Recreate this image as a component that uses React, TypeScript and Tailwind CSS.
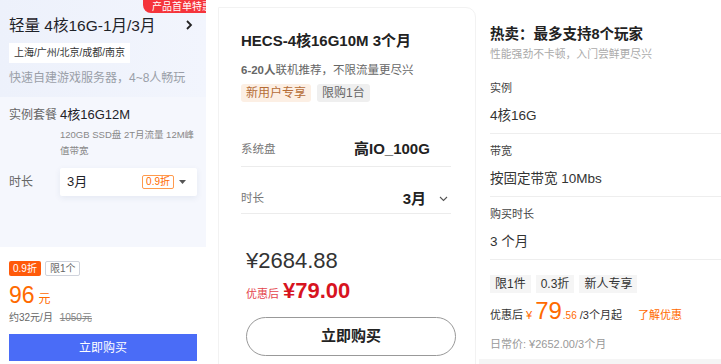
export default function App() {
  return (
    <div className="flex w-[721px] h-[364px] overflow-hidden bg-white items-start [font-family:'Liberation_Sans','Noto_Sans_CJK_SC',sans-serif]">
      {/* 轻量 card */}
      <div className="w-[206px] h-[364px] flex flex-col overflow-hidden shrink-0">
        <div className="relative h-[97px] px-[9px] pt-[14px] bg-linear-to-r from-[#edf1fb] to-[#f2f5fd]">
          <div className="absolute top-0 left-[143px] h-[13px] w-[72px] bg-[#f5343b] rounded-bl-[8px] pl-[9px] text-[10px] leading-[13px] text-white whitespace-nowrap overflow-hidden">
            产品首单特惠
          </div>
          <div className="flex items-center justify-between pr-[4px]">
            <div className="text-[15.5px] leading-[24px] text-[#1f2329]">轻量 4核16G-1月/3月</div>
            <svg width="8" height="10" viewBox="0 0 8 10" className="mt-[-2px]">
              <polyline points="2,1 6,5 2,9" fill="none" stroke="#222" strokeWidth="1.8" />
            </svg>
          </div>
          <div className="mt-[5px] inline-block bg-white px-[5px] h-[20px] leading-[20px] text-[10px] text-[#333]">
            上海/广州/北京/成都/南京
          </div>
          <div className="mt-[6px] text-[12px] leading-[18px] text-[#9a9fa8]">快速自建游戏服务器，4~8人畅玩</div>
        </div>
        <div className="h-[150px] bg-[#f5f7fd] px-[9px] pt-[9px]">
          <div className="flex">
            <div className="w-[51px] shrink-0 text-[12px] leading-[18px] text-[#666]">实例套餐</div>
            <div>
              <div className="text-[13px] leading-[18px] text-[#1f2329]">4核16G12M</div>
              <div className="mt-[3px] text-[9.5px] leading-[16px] text-[#888]">120GB SSD盘 2T月流量 12M峰值带宽</div>
            </div>
          </div>
          <div className="flex items-center mt-[9px]">
            <div className="w-[51px] shrink-0 text-[12px] text-[#666]">时长</div>
            <div className="w-[137px] h-[28px] bg-white rounded-[2px] shadow-[0_2px_6px_rgba(40,60,120,0.08)] flex items-center px-[7px]">
              <span className="text-[13px] text-[#1f2329]">3月</span>
              <span className="ml-auto border border-[#ff9a4d] text-[#ff6a00] text-[10px] leading-[12px] px-[3px] rounded-[2px]">0.9折</span>
              <svg width="7" height="4" viewBox="0 0 7 4" className="ml-[5px] mr-[4px]">
                <polygon points="0,0 7,0 3.5,4" fill="#555" />
              </svg>
            </div>
          </div>
        </div>
        <div className="flex-1 bg-white px-[9px] pt-[14px]">
          <div className="flex gap-[4px]">
            <span className="h-[15px] leading-[15px] px-[4px] text-[10px] text-white bg-[#ff5a0a] rounded-[2px]">0.9折</span>
            <span className="h-[15px] leading-[13px] px-[4px] text-[10px] text-[#666] border border-[#cfd3dc] rounded-[2px]">限1个</span>
          </div>
          <div className="mt-[4px] h-[30px] leading-[30px] text-[#ff6a00]">
            <span className="text-[23px]">96</span>
            <span className="text-[12px] ml-[4px]">元</span>
          </div>
          <div className="h-[16px] text-[10px] leading-[16px] text-[#666]">
            约32元/月 <span className="ml-[4px] line-through text-[#888]">1050元</span>
          </div>
          <button className="block mt-[8px] w-[188px] h-[27px] bg-[#4a6cf7] text-white text-[12px]">立即购买</button>
        </div>
      </div>

      {/* HECS card */}
      <div className="ml-[12px] mt-[7px] w-[258px] h-[370px] shrink-0 border border-[#f2f2f2] rounded-tr-[10px] bg-white px-[22px] pt-[22px]">
        <div className="text-[15px] leading-[22px] font-bold text-[#222]">HECS-4核16G10M 3个月</div>
        <div className="mt-[9px] text-[11.5px] leading-[18px] text-[#666]">
          <span className="font-bold">6-20人</span>联机推荐，不限流量更尽兴
        </div>
        <div className="mt-[5px] flex gap-[6px]">
          <span className="h-[18px] leading-[18px] px-[5px] rounded-[3px] text-[12px] bg-[#fcefe4] text-[#b56c36]">新用户专享</span>
          <span className="h-[18px] leading-[18px] px-[5px] rounded-[3px] text-[12px] bg-[#efefef] text-[#666]">限购1台</span>
        </div>
        <div className="mt-[31px] mr-[2px] h-[34px] flex items-center border-b border-[#ececec]">
          <span className="w-[113px] text-[11.5px] text-[#777]">系统盘</span>
          <span className="text-[15px] font-bold text-[#222]">高IO_100G</span>
        </div>
        <div className="mr-[2px] h-[47px] pt-[18px] flex items-center border-b border-[#ececec]">
          <span className="text-[11.5px] text-[#777]">时长</span>
          <span className="ml-auto text-[15px] font-bold text-[#222]">3月</span>
          <svg width="9" height="6" viewBox="0 0 9 6" className="ml-[13px] mr-[3px]">
            <polyline points="1,1 4.5,4.5 8,1" fill="none" stroke="#555" strokeWidth="1.1" />
          </svg>
        </div>
        <div className="ml-[5px]">
          <div className="mt-[33px] text-[22px] leading-[28px] text-[#333]">¥2684.88</div>
          <div className="mt-[2px] flex items-baseline leading-[28px] text-[#d7141f]">
            <span className="text-[11px] text-[#e4454c]">优惠后</span>
            <span className="ml-[4px] text-[22px] font-bold">¥79.00</span>
          </div>
          <button className="mt-[9px] w-[210px] h-[39px] rounded-full border border-[#999] text-[15px] font-bold text-[#222] bg-white">
            立即购买
          </button>
        </div>
      </div>

      {/* 热卖 card */}
      <div className="ml-[3px] w-[243px] h-[364px] flex flex-col bg-white">
        <div className="pl-[11px] pt-[23px]">
          <div className="text-[14.5px] leading-[22px] font-bold text-[#222]">热卖：最多支持8个玩家</div>
          <div className="mt-[1px] text-[10.8px] leading-[16px] text-[#aaa]">性能强劲不卡顿，入门尝鲜更尽兴</div>
          <div className="mt-[18px] pb-[7px] border-b border-[#eee]">
            <div className="text-[11px] leading-[16px] text-[#444]">实例</div>
            <div className="mt-[10px] text-[13.5px] leading-[20px] text-[#333]">4核16G</div>
          </div>
          <div className="pt-[9px] pb-[7px] border-b border-[#eee]">
            <div className="text-[11px] leading-[16px] text-[#444]">带宽</div>
            <div className="mt-[10px] text-[13.5px] leading-[20px] text-[#333]">按固定带宽 10Mbs</div>
          </div>
          <div className="pt-[9px] pb-[7px] border-b border-[#eee]">
            <div className="text-[11px] leading-[16px] text-[#444]">购买时长</div>
            <div className="mt-[10px] text-[13.5px] leading-[20px] text-[#333]">3 个月</div>
          </div>
          <div className="mt-[15px] flex gap-[5px]">
            <span className="h-[18px] leading-[18px] px-[5px] bg-[#f5f5f5] text-[12px] text-[#333]">限1件</span>
            <span className="h-[18px] leading-[18px] px-[5px] bg-[#f5f5f5] text-[12px] text-[#333]">0.3折</span>
            <span className="h-[18px] leading-[18px] px-[5px] bg-[#f5f5f5] text-[12px] text-[#333]">新人专享</span>
          </div>
          <div className="mt-[3px] flex items-baseline leading-[30px] text-[24px]">
            <span className="text-[11px] text-[#333]">优惠后</span>
            <span className="ml-[3px] text-[11px] text-[#ff6a00]">¥</span>
            <span className="ml-[3px] text-[#ff6a00]">79</span>
            <span className="ml-[1px] text-[10px] text-[#ff6a00]">.56</span>
            <span className="ml-[3px] text-[11px] text-[#333]">/3个月起</span>
            <span className="ml-[16px] text-[11px] text-[#ff6a00]">了解优惠</span>
          </div>
          <div className="mt-[5px] text-[11px] leading-[16px] text-[#999]">日常价: ¥2652.00/3个月</div>
        </div>
        <div className="mt-auto h-[5px] bg-[#f5f5f5]" />
      </div>
    </div>
  )
}
